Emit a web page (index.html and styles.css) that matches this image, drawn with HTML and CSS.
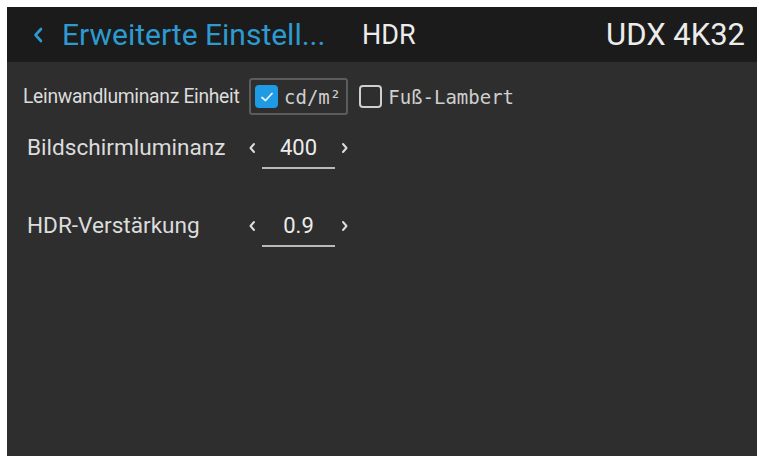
FILE: index.html
```html
<!DOCTYPE html>
<html>

<head>
    <meta charset="utf-8" />
    <title>HDR</title>
    <link rel="stylesheet" href="styles.css">
</head>

<body>
    <div class="screen">
        <div class="topbar">
            <svg class="back" width="10" height="16" viewBox="0 0 10 16">
                <path d="M8 2 L2.5 8 L8 14" fill="none" stroke="#2d9ad0" stroke-width="2.6" stroke-linecap="round" stroke-linejoin="round" />
            </svg>
            <div class="crumb">Erweiterte Einstell...</div>
            <div class="page-title">HDR</div>
            <div class="device">UDX 4K32</div>
        </div>

        <div class="content">
            <div class="unit-row">
                <div class="unit-label">Leinwandluminanz Einheit</div>
                <div class="option selected">
                    <span class="check on">
                        <svg width="14" height="12" viewBox="0 0 14 12">
                            <path d="M2 6.5 L5.5 9.5 L12 2.5" fill="none" stroke="#e6f4ff" stroke-width="1.8" stroke-linecap="round" stroke-linejoin="round" />
                        </svg>
                    </span>
                    <span class="option-text">cd/m²</span>
                </div>
                <div class="option">
                    <span class="check"></span>
                    <span class="option-text">Fuß-Lambert</span>
                </div>
            </div>

            <div class="setting">
                <div class="setting-label">Bildschirmluminanz</div>
                <div class="stepper">
                    <svg class="arrow" width="8" height="12" viewBox="0 0 8 12">
                        <path d="M6 2 L2.5 6 L6 10" fill="none" stroke="#dcdcdc" stroke-width="2" stroke-linecap="round" stroke-linejoin="round" />
                    </svg>
                    <div class="value">400</div>
                    <svg class="arrow" width="8" height="12" viewBox="0 0 8 12">
                        <path d="M2 2 L5.5 6 L2 10" fill="none" stroke="#dcdcdc" stroke-width="2" stroke-linecap="round" stroke-linejoin="round" />
                    </svg>
                </div>
            </div>

            <div class="setting gain">
                <div class="setting-label">HDR-Verstärkung</div>
                <div class="stepper">
                    <svg class="arrow" width="8" height="12" viewBox="0 0 8 12">
                        <path d="M6 2 L2.5 6 L6 10" fill="none" stroke="#dcdcdc" stroke-width="2" stroke-linecap="round" stroke-linejoin="round" />
                    </svg>
                    <div class="value">0.9</div>
                    <svg class="arrow" width="8" height="12" viewBox="0 0 8 12">
                        <path d="M2 2 L5.5 6 L2 10" fill="none" stroke="#dcdcdc" stroke-width="2" stroke-linecap="round" stroke-linejoin="round" />
                    </svg>
                </div>
            </div>
        </div>
    </div>
</body>

</html>
```

FILE: styles.css
```css
body {
    margin: 7px 2px 0 7px;
    background: #fff;
    font-family: Roboto, "Liberation Sans", sans-serif;
    overflow: hidden;
}

.screen {
    display: flex;
    flex-direction: column;
    height: 449px;
    background: #2e2e2e;
}

.topbar {
    display: flex;
    align-items: center;
    height: 55px;
    padding: 0 12px 0 26px;
    background: #1b1b1b;
}

.back {
    flex: none;
}

.crumb {
    margin-left: 19px;
    width: 300px;
    color: #2d9ad0;
    font-size: 30px;
    white-space: nowrap;
}

.page-title {
    color: #ececec;
    font-size: 27px;
}

.device {
    margin-left: auto;
    color: #ececec;
    font-size: 31px;
}

.content {
    display: flex;
    flex-direction: column;
    padding-left: 16px;
}

.unit-row {
    display: flex;
    align-items: center;
    height: 37px;
    margin-top: 16px;
}

.unit-label {
    width: 226px;
    color: #dcdcdc;
    font-size: 19.3px;
    letter-spacing: -0.3px;
    white-space: nowrap;
}

.option {
    display: flex;
    align-items: center;
    gap: 6px;
    height: 33px;
    padding: 0 5px 0 4px;
    border: 2px solid transparent;
    border-radius: 3px;
}

.option.selected {
    border-color: #5c5c5c;
    margin-right: 5px;
}

.check {
    display: flex;
    align-items: center;
    justify-content: center;
    box-sizing: border-box;
    width: 23px;
    height: 23px;
    border: 2px solid #cfcfcf;
    border-radius: 4px;
}

.check.on {
    background: #1e9be4;
    border-color: #1e9be4;
}

.option-text {
    color: #cfcfcf;
    font-family: "DejaVu Sans Mono", "Liberation Mono", monospace;
    font-size: 19px;
}

.setting {
    display: flex;
    align-items: flex-start;
    margin-top: 18px;
    padding-left: 4px;
}

.setting.gain {
    margin-top: 42px;
}

.setting-label {
    width: 221px;
    line-height: 30px;
    color: #dcdcdc;
    font-size: 22.6px;
}

.stepper {
    display: flex;
    align-items: flex-start;
}

.arrow {
    margin-top: 9px;
}

.value {
    width: 73px;
    margin: 0 6px 0 6px;
    padding-bottom: 4px;
    border-bottom: 2px solid #b9b9b9;
    line-height: 30px;
    text-align: center;
    color: #ececec;
    font-size: 22px;
}
```
